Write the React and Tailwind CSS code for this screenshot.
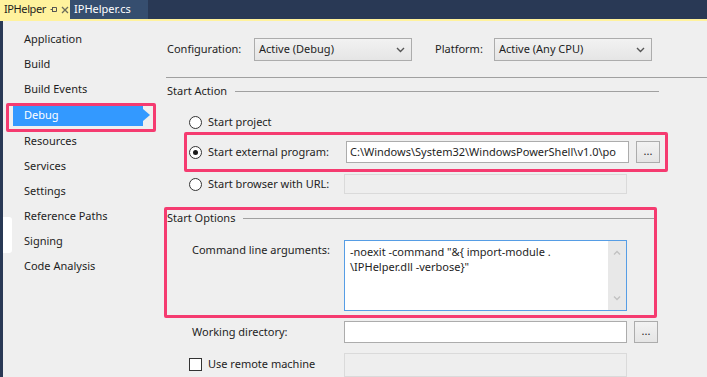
import { useState } from 'react'

const navItems = [
  'Application',
  'Build',
  'Build Events',
  'Debug',
  'Resources',
  'Services',
  'Settings',
  'Reference Paths',
  'Signing',
  'Code Analysis',
]

const argLines = ['-noexit -command "&{ import-module .', '\\IPHelper.dll -verbose}"']

function Chevron() {
  return (
    <svg width="9" height="6" viewBox="0 0 9 6" className="shrink-0">
      <path d="M1 1 L4.5 4.5 L8 1" fill="none" stroke="#555" strokeWidth="1.4" />
    </svg>
  )
}

function Select({ value }) {
  return (
    <div className="h-[23px] w-[158px] border border-[#acacac] bg-gradient-to-b from-[#f2f2f2] to-[#e5e5e5] flex items-center justify-between pl-[4px] pr-[6px]">
      <span>{value}</span>
      <Chevron />
    </div>
  )
}

function Radio({ checked }) {
  return (
    <div className="w-[13px] h-[13px] rounded-full border border-[#333] bg-white flex items-center justify-center shrink-0">
      {checked && <div className="w-[5px] h-[5px] rounded-full bg-[#1a1a1a]" />}
    </div>
  )
}

function Browse() {
  return (
    <div className="ml-[7px] w-[24px] h-[22px] border border-[#acacac] bg-gradient-to-b from-[#f2f2f2] to-[#e5e5e5] flex items-center justify-center text-[11px] leading-none pb-[4px]">
      ...
    </div>
  )
}

function Heading({ label }) {
  return (
    <div className="flex items-center h-[16px]">
      <span>{label}</span>
      <div className="flex-1 h-px bg-[#a0a0a0] ml-[8px]" />
    </div>
  )
}

export default function App() {
  const [active] = useState('Debug')

  return (
    <div
      className="w-[707px] h-[377px] overflow-hidden bg-[#efefef] text-[11px] text-[#1e1e1e] relative"
      style={{ fontFamily: '"Segoe UI", "Noto Sans", sans-serif' }}
    >
      {/* document tabs */}
      <div className="h-[19px] bg-[#293955] flex">
        <div className="w-[70px] bg-[#fff29d] flex items-center pl-[4px] overflow-hidden">
          <span className="tracking-[-0.4px]">IPHelper</span>
          <svg width="7" height="7" viewBox="0 0 7 7" className="ml-[4px] shrink-0">
            <path d="M0.5 3.5 H2.5 M2.5 1 V6 M2.5 1.5 H6.5 V5.5 H2.5" fill="none" stroke="#555" strokeWidth="1" />
          </svg>
          <svg width="8" height="8" viewBox="0 0 8 8" className="ml-[4px] shrink-0">
            <path d="M1 1 L7 7 M7 1 L1 7" stroke="#6b6b5a" strokeWidth="1.3" />
          </svg>
        </div>
        <div className="w-[78px] bg-[#364e6f] flex items-center pl-[4px] text-white">IPHelper.cs</div>
      </div>
      <div className="h-[2px] bg-[#fff29d]" />

      <div className="flex h-[356px] border-l-[3px] border-[#293955]">
        {/* left nav */}
        <div className="w-[157px] pt-[6px] shrink-0">
          {navItems.map((item) =>
            item === active ? (
              <div key={item} className="relative h-[25px]">
                <div className="relative ml-[10px] mt-[2px] h-[22px] w-[130px] bg-[#3399ff] text-white flex items-center pl-[11px]">
                  {item}
                  <svg width="7" height="12" viewBox="0 0 7 12" className="absolute right-[-7px] top-[5px]">
                    <path d="M0 0 L7 6 L0 12 Z" fill="#3399ff" />
                  </svg>
                </div>
                <div className="absolute left-[3px] top-[-1px] w-[150px] h-[29px] border-[3px] border-[#f53b70] rounded-[2px]" />
              </div>
            ) : (
              <div key={item} className="h-[25px] flex items-center pl-[21px]">
                {item}
              </div>
            )
          )}
        </div>

        {/* page */}
        <div className="flex-1 pl-[7px]">
          <div className="mt-[17px] flex items-center h-[23px]">
            <span className="w-[87px]">Configuration:</span>
            <Select value="Active (Debug)" />
            <span className="ml-[23px] w-[59px]">Platform:</span>
            <Select value="Active (Any CPU)" />
          </div>

          <div className="mt-[16px] -ml-[1px] h-px bg-[#a0a0a0]" />

          <div className="mt-[5px] mr-[48px]">
            <Heading label="Start Action" />
          </div>

          <div className="mt-[13px] h-[20px] flex items-center pl-[22px]">
            <Radio />
            <span className="ml-[6px]">Start project</span>
          </div>

          <div className="ml-[17px] w-[484px] h-[40px] border-[3px] border-[#f53b70] rounded-[2px] flex items-center pl-[2px]">
            <div className="w-[157px] flex items-center">
              <Radio checked />
              <span className="ml-[6px]">Start external program:</span>
            </div>
            <div className="w-[283px] h-[22px] border border-[#acacac] bg-white flex items-center pl-[3px] overflow-hidden whitespace-nowrap">
              {'C:\\Windows\\System32\\WindowsPowerShell\\v1.0\\po'}
            </div>
            <Browse />
          </div>

          <div className="h-[24px] flex items-center pl-[22px]">
            <div className="w-[155px] flex items-center">
              <Radio />
              <span className="ml-[6px]">Start browser with URL:</span>
            </div>
            <div className="w-[283px] h-[20px] border border-[#dadada] bg-[#eeeeee]" />
          </div>

          <div className="mt-[11px] -ml-[3px] w-[493px] border-[3px] border-[#f53b70] rounded-[2px] pb-[4px]">
            <Heading label="Start Options" />
            <div className="mt-[14px] flex">
              <div className="w-[177px] pl-[25px] pt-[2px]">Command line arguments:</div>
              <div className="relative w-[283px] h-[71px] border border-[#569de5] bg-white pl-[5px] pr-[22px] pt-[3px] leading-[15px]">
                {argLines.map((l) => (
                  <div key={l}>{l}</div>
                ))}
                <div className="absolute right-0 top-0 bottom-0 w-[18px] bg-[#e8e8e8] flex flex-col items-center justify-between py-[9px]">
                  <svg width="8" height="5" viewBox="0 0 8 5">
                    <path d="M1 4.5 L4 1.5 L7 4.5" fill="none" stroke="#c2c2c2" strokeWidth="1.4" />
                  </svg>
                  <svg width="8" height="5" viewBox="0 0 8 5">
                    <path d="M1 0.5 L4 3.5 L7 0.5" fill="none" stroke="#c2c2c2" strokeWidth="1.4" />
                  </svg>
                </div>
              </div>
            </div>
          </div>

          <div className="mt-[3px] h-[22px] flex items-center">
            <div className="w-[177px] pl-[25px]">Working directory:</div>
            <div className="w-[283px] h-[22px] border border-[#acacac] bg-white" />
            <Browse />
          </div>

          <div className="mt-[10px] h-[22px] flex items-center">
            <div className="w-[177px] pl-[22px] flex items-center">
              <div className="w-[13px] h-[13px] border border-[#333] bg-white shrink-0" />
              <span className="ml-[6px]">Use remote machine</span>
            </div>
            <div className="w-[283px] h-[24px] border border-[#dadada] bg-[#eeeeee] self-start" />
          </div>
        </div>
      </div>

      <div className="absolute left-[3px] top-[217px] w-[9px] h-[36px] bg-white rounded-r-[3px]" />
    </div>
  )
}
